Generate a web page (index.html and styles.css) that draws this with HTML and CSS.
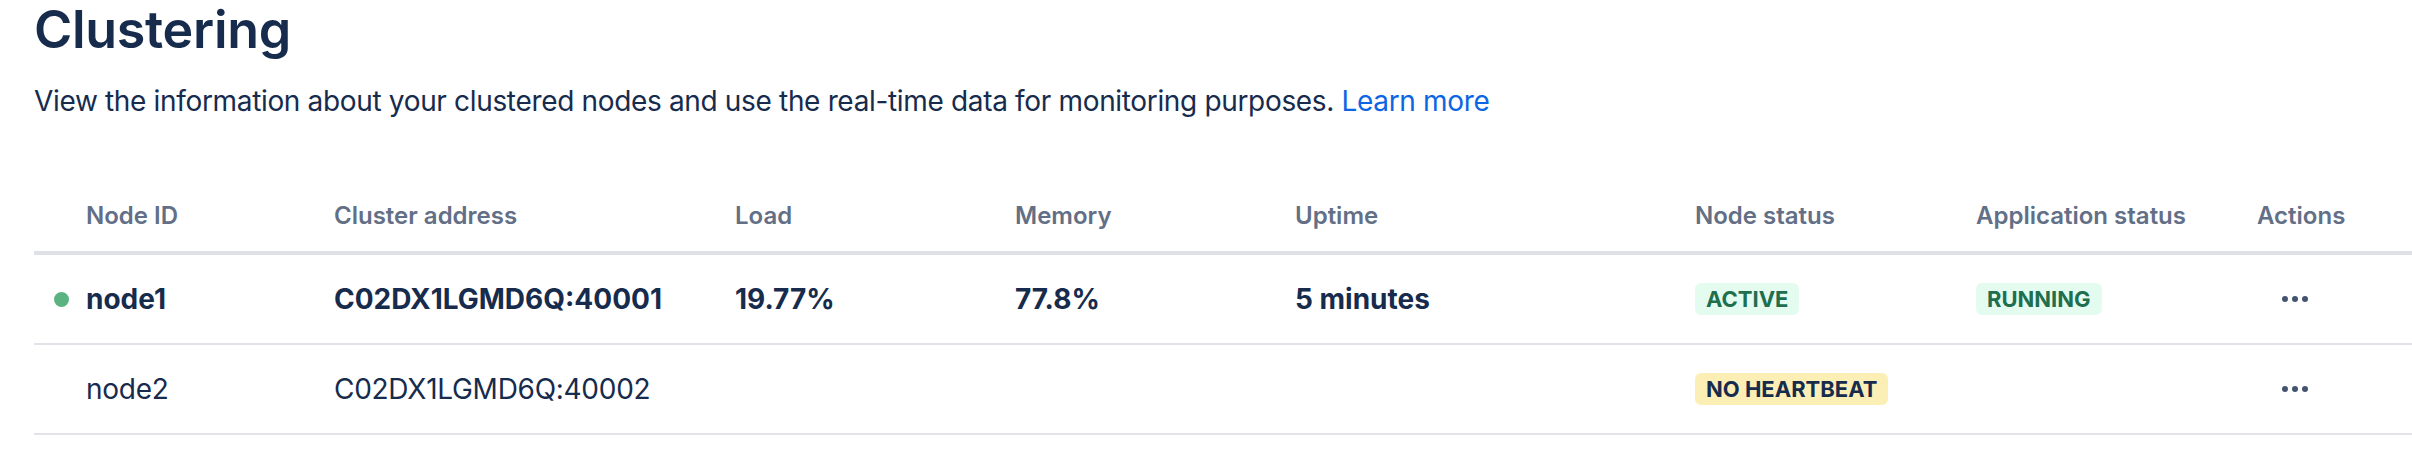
FILE: index.html
```html
<!DOCTYPE html>
<html lang="en">
<head>
<meta charset="utf-8">
<title>Clustering</title>
<link rel="stylesheet" href="styles.css">
</head>
<body>
<main class="page">
  <h1 class="title">Clustering</h1>
  <p class="desc">View the information about your clustered nodes and use the real-time data for monitoring purposes. <a class="link" href="#">Learn more</a></p>

  <div class="table">
    <div class="row head">
      <div class="cell first">Node ID</div>
      <div class="cell">Cluster address</div>
      <div class="cell">Load</div>
      <div class="cell">Memory</div>
      <div class="cell">Uptime</div>
      <div class="cell">Node status</div>
      <div class="cell">Application status</div>
      <div class="cell">Actions</div>
    </div>

    <div class="row body current">
      <div class="cell first"><span class="dot"></span>node1</div>
      <div class="cell">C02DX1LGMD6Q:40001</div>
      <div class="cell">19.77%</div>
      <div class="cell">77.8%</div>
      <div class="cell">5 minutes</div>
      <div class="cell"><span class="lozenge success">Active</span></div>
      <div class="cell"><span class="lozenge success">Running</span></div>
      <div class="cell"><button class="more" aria-label="Actions"><svg width="26" height="6" viewBox="0 0 26 6"><circle cx="3" cy="3" r="3"/><circle cx="13" cy="3" r="3"/><circle cx="23" cy="3" r="3"/></svg></button></div>
    </div>

    <div class="row body">
      <div class="cell first"><span class="dot hidden"></span>node2</div>
      <div class="cell">C02DX1LGMD6Q:40002</div>
      <div class="cell"></div>
      <div class="cell"></div>
      <div class="cell"></div>
      <div class="cell"><span class="lozenge warning">No heartbeat</span></div>
      <div class="cell"></div>
      <div class="cell"><button class="more" aria-label="Actions"><svg width="26" height="6" viewBox="0 0 26 6"><circle cx="3" cy="3" r="3"/><circle cx="13" cy="3" r="3"/><circle cx="23" cy="3" r="3"/></svg></button></div>
    </div>
  </div>
</main>
</body>
</html>
```
FILE: styles.css
```css
html, body {
  margin: 0;
  padding: 0;
  background: #ffffff;
}

body {
  font-family: Inter, "Liberation Sans", Arial, sans-serif;
  color: #172B4D;
}

.page {
  padding: 2px 0 0 34px;
}

.title {
  margin: 0;
  font-size: 52px;
  line-height: 56px;
  font-weight: 600;
  letter-spacing: -0.006em;
  color: #172B4D;
}

.desc {
  margin: 23px 0 0 0;
  font-size: 28px;
  line-height: 40px;
  font-weight: 400;
  letter-spacing: -0.012em;
  color: #172B4D;
}

.link {
  color: #0C66E4;
  text-decoration: none;
}

.table {
  margin-top: 58px;
}

.row {
  display: grid;
  grid-template-columns: 300px 401px 280px 280px 400px 281px 281px 1fr;
  align-items: center;
}

.head {
  height: 72px;
  border-bottom: 4px solid #DFE1E6;
  font-size: 24px;
  font-weight: 600;
  color: #626F86;
  letter-spacing: 0;
}

.body {
  height: 88px;
  border-bottom: 2px solid #E2E3E8;
  font-size: 28px;
  letter-spacing: -0.01em;
}

.current {
  font-weight: 700;
  letter-spacing: 0;
}

.cell {
  display: flex;
  align-items: center;
  white-space: nowrap;
}

.head .first {
  padding-left: 52px;
}

.body .first {
  padding-left: 20px;
}

.dot {
  width: 15px;
  height: 15px;
  border-radius: 50%;
  background: #5BB381;
  margin-right: 17px;
  flex: none;
}

.dot.hidden {
  background: transparent;
}

.lozenge {
  display: inline-flex;
  align-items: center;
  height: 32px;
  padding: 0 11px;
  border-radius: 6px;
  font-size: 22px;
  font-weight: 700;
  text-transform: uppercase;
  letter-spacing: 0;
}

.success {
  background: #E3FCEF;
  color: #216E4E;
}

.warning {
  background: #FBEFB6;
  color: #172B4D;
}

.more {
  display: inline-flex;
  align-items: center;
  justify-content: center;
  width: 64px;
  height: 64px;
  margin-left: 6px;
  padding: 0;
  border: 0;
  background: transparent;
  fill: #44546F;
}
```
